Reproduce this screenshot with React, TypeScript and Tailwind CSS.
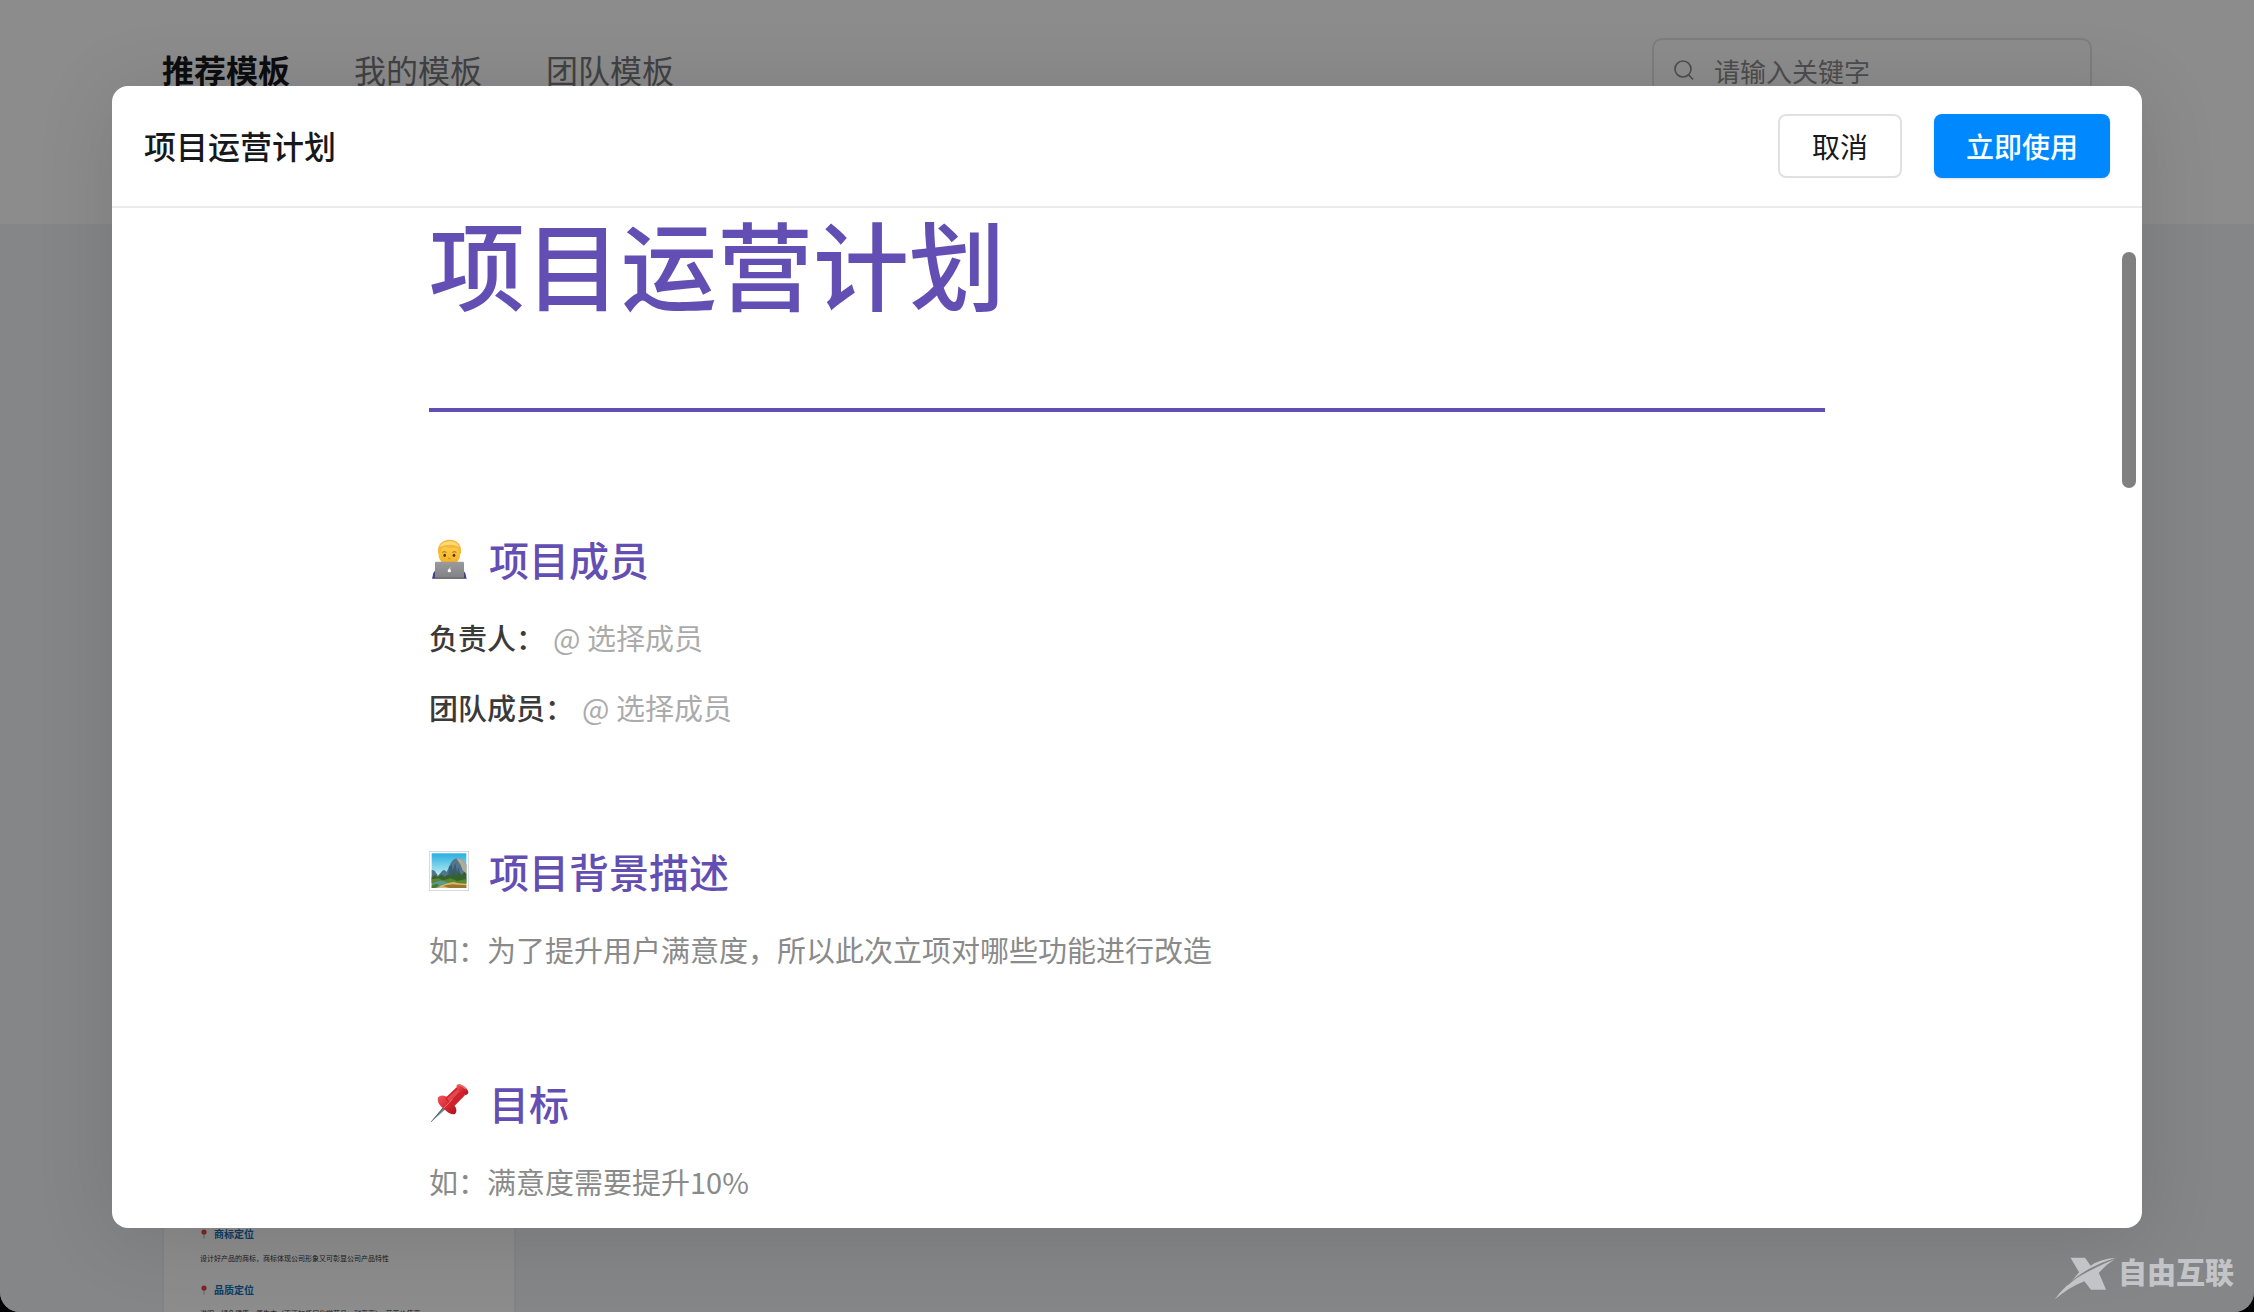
import { ReactNode } from "react";

const tabs = [
  { name: "推荐模板", active: true },
  { name: "我的模板", active: false },
  { name: "团队模板", active: false },
];

function SearchIcon() {
  return (
    <svg viewBox="0 0 20 20" className="size-5 shrink-0" fill="none" stroke="#8c8d8f" strokeWidth="1.6" strokeLinecap="round">
      <circle cx="9" cy="9" r="8" />
      <path d="M15 15.4 18.6 19" />
    </svg>
  );
}

function TechnologistIcon() {
  return (
    <svg viewBox="0 0 120 120" className="size-10 shrink-0">
      <defs>
        <linearGradient id="face" x1="0" y1="0" x2="0" y2="1">
          <stop offset="0" stopColor="#ffd95a" />
          <stop offset="1" stopColor="#f3ac1d" />
        </linearGradient>
        <linearGradient id="lid" x1="0" y1="0" x2="0" y2="1">
          <stop offset="0" stopColor="#9b9b9e" />
          <stop offset="1" stopColor="#818184" />
        </linearGradient>
      </defs>
      <path d="M9 119 13 103Q17 93 28 91L95 91Q106 94 109 103L113 119Z" fill="#3c4486" />
      <ellipse cx="61" cy="42" rx="33" ry="38" fill="url(#face)" />
      <path d="M27 43C24 18 38 2 62 2S99 18 96 43L90 44Q90 29 80 26 63 29 45 24 34 31 33 44Z" fill="#f6b73c" />
      <path d="M31 24Q40 8 60 7 84 7 91 24 72 13 46 19Z" fill="#ffdc72" />
      <ellipse cx="47" cy="49" rx="4" ry="5" fill="#5b3413" />
      <ellipse cx="75" cy="49" rx="4" ry="5" fill="#5b3413" />
      <path d="M40 40Q46 36 52 40M70 40Q76 36 82 40" stroke="#a8690f" strokeWidth="3" fill="none" />
      <path d="M58 58Q61 60 64 58" stroke="#c27c17" strokeWidth="3" fill="none" />
      <rect x="18" y="68" width="87" height="51" rx="4" fill="url(#lid)" />
      <path d="M18 115H105V119H18Z" fill="#6d6d70" />
      <circle cx="61" cy="95" r="5" fill="#fff" />
      <path d="M61 90Q62 87 65 86" stroke="#fff" strokeWidth="2" fill="none" />
    </svg>
  );
}

function LandscapeIcon() {
  return (
    <svg viewBox="0 0 120 120" className="size-10 shrink-0">
      <defs>
        <linearGradient id="sky" x1="0" y1="0" x2="0" y2="1">
          <stop offset="0" stopColor="#27aee0" />
          <stop offset="0.6" stopColor="#b4eaf2" />
        </linearGradient>
      </defs>
      <rect x="1" y="1" width="118" height="118" fill="#fff" stroke="#c5c9cb" strokeWidth="2" />
      <rect x="8" y="7" width="104" height="104" fill="url(#sky)" />
      <path d="M8 56 17 59 27 74 40 59Q47 54 53 63L60 47Q68 26 82 22 94 20 102 29L112 40V86H8Z" fill="#52758b" />
      <path d="M82 22Q94 20 102 29L112 40V69L101 58 95 42Z" fill="#b2ab96" />
      <path d="M60 47 68 41 71 59 79 37 84 62 90 48 93 74H58Z" fill="#385d74" />
      <path d="M8 78 18 72 26 79 37 70 47 77 56 71 66 74 73 64 82 74 90 63 98 72 106 62 112 68V97H8Z" fill="#36632c" />
      <path d="M8 85 28 82 41 88 65 82 84 90 112 84V99H8Z" fill="#5c8630" />
      <path d="M8 99Q31 85 45 91L59 97 43 111H8Z" fill="#5c9990" />
      <path d="M24 111Q45 97 75 93 87 98 112 98V111Z" fill="#d9b866" />
      <path d="M42 105Q69 97 85 101L112 103V111H61Z" fill="#9b7433" />
      <path d="M8 104 22 98 31 103 18 111H8Z" fill="#487c2b" />
    </svg>
  );
}

function PushpinIcon() {
  return (
    <svg viewBox="0 0 120 120" className="size-10 shrink-0">
      <defs>
        <linearGradient id="pin" x1="0" y1="0" x2="1" y2="1">
          <stop offset="0" stopColor="#f25b5f" />
          <stop offset="0.55" stopColor="#d8252d" />
          <stop offset="1" stopColor="#a5141d" />
        </linearGradient>
      </defs>
      <path d="M6 117 45 68 53 76Z" fill="#75848e" />
      <path d="M6 117 46 71" stroke="#3f4b55" strokeWidth="2" />
      <path d="M27 43Q38 32 57 43L75 65Q88 83 78 93 65 98 45 78 21 61 27 43Z" fill="url(#pin)" />
      <path d="M49 45 83 13 108 37 77 68Q59 65 49 45Z" fill="#cf222b" />
      <path d="M54 46 86 18 94 24 62 57Z" fill="#e2484d" />
      <path d="M84 5Q93 0 107 11 122 24 116 33 108 41 94 28 79 14 84 5Z" fill="url(#pin)" />
      <path d="M89 6Q98 5 109 17" stroke="#f06c6f" strokeWidth="4" strokeLinecap="round" fill="none" />
      <path d="M45 75 70 49" stroke="#ee9a9c" strokeWidth="2" />
    </svg>
  );
}

function MapPinIcon() {
  return (
    <svg viewBox="0 0 8 10" className="h-[10px] w-2 shrink-0">
      <path d="M3.6 5H4.4V9.4H3.6Z" fill="#99a0a5" />
      <circle cx="4" cy="3" r="2.6" fill="#e0444c" />
    </svg>
  );
}

function Watermark() {
  return (
    <div className="absolute right-5 bottom-3 flex items-start text-[#c3c4c7]">
      <svg viewBox="18 28 194 130" className="h-[43px] w-16" fill="currentColor">
        <path d="M68 30H112L129 54Q158 33 210 30 121 56 70 103L94 74Z" />
        <path d="M20 157Q52 112 93 88 140 60 204 32 176 50 154 76L176 127H130L110 101Q61 120 20 157Z" />
        <path d="M60 112Q112 61 210 30" stroke="#858688" strokeWidth="3" fill="none" />
      </svg>
      <span className="text-[29px] leading-7 font-black">自由互联</span>
    </div>
  );
}

function SectionTitle({ icon, children }: { icon: ReactNode; children: ReactNode }) {
  return (
    <h2 className="flex items-center gap-5 text-[40px] leading-[60px] font-medium text-[#634fb3]">
      {icon}
      {children}
    </h2>
  );
}

function MemberRow({ label }: { label: string }) {
  return (
    <div className="flex items-center gap-2 text-[29px] leading-[48px]">
      <span className="font-medium text-[#3a3a3a]">{label}</span>
      <button type="button" className="font-normal text-[#ababab]">@ 选择成员</button>
    </div>
  );
}

function TemplateCard() {
  return (
    <article className="mt-8 w-[354px] border-2 border-[#eceef2] bg-white px-9 pt-[968px] text-[7px] leading-3 text-[#333333]">
      <h3 className="flex items-center gap-[6px] text-[10px] leading-4 font-bold text-[#0f6fb8]">
        <MapPinIcon />
        商标定位
      </h3>
      <p className="mt-[10px] whitespace-nowrap">设计好产品的商标，商标体现公司形象又可彰显公司产品特性</p>
      <h3 className="mt-[18px] flex items-center gap-[6px] text-[10px] leading-4 font-bold text-[#0f6fb8]">
        <MapPinIcon />
        品质定位
      </h3>
      <p className="mt-[9px] whitespace-nowrap">说明：绿色健康，原生态（不添加任何化学药品、耐高高），营养价值高</p>
    </article>
  );
}

export default function App() {
  return (
    <div className="h-screen bg-black font-['Noto_Sans_CJK_SC',sans-serif]">
      <div className="relative h-full overflow-hidden rounded-b-[20px] bg-[#f3f5f8]">
        {/* Template gallery */}
        <header className="flex h-56 items-start justify-between bg-white px-[162px] pt-[38px]">
          <nav className="flex gap-16">
            {tabs.map((tab) => (
              <a
                key={tab.name}
                href="#"
                className={`text-[32px] leading-[62px] ${tab.active ? "font-bold text-[#17181a]" : "font-normal text-[#77787a]"}`}
              >
                {tab.name}
              </a>
            ))}
          </nav>
          <label className="flex h-16 w-[440px] items-center gap-5 rounded-[10px] border-2 border-[#e2e3e5] px-5">
            <SearchIcon />
            <input
              type="text"
              aria-label="搜索模板"
              placeholder="请输入关键字"
              className="min-w-0 flex-1 text-[26px] outline-none placeholder:text-[#8c8d8f]"
            />
          </label>
        </header>
        <main className="px-[162px]">
          <TemplateCard />
        </main>

        {/* Preview dialog */}
        <div className="absolute inset-0 flex bg-black/45 px-28 pt-[86px] pb-[84px]">
          <div
            role="dialog"
            aria-label="项目运营计划"
            className="flex min-w-0 flex-1 flex-col overflow-hidden rounded-2xl bg-white shadow-[0_8px_80px_rgba(0,0,0,0.12)]"
          >
            <div className="flex shrink-0 items-start justify-between border-b-2 border-[#ebebeb] px-8 py-7">
              <h4 className="text-[32px] leading-[62px] font-medium text-[#17181a]">项目运营计划</h4>
              <div className="flex gap-8">
                <button type="button" className="h-16 rounded-lg border-2 border-[#e0e1e3] px-8 text-[28px] text-[#17181a]">
                  取消
                </button>
                <button type="button" className="h-16 rounded-lg bg-[#0089ff] px-8 text-[28px] font-medium text-white shadow-sm">
                  立即使用
                </button>
              </div>
            </div>

            <div className="relative min-h-0 flex-1 overflow-hidden">
              <div className="mx-auto max-w-[1396px]">
                <h1 className="text-[96px] leading-[108px] font-medium text-[#634fb3]">项目运营计划</h1>
                <hr className="mt-[92px] border-t-4 border-[#634fb3]" />

                <section className="mt-[117px]">
                  <SectionTitle icon={<TechnologistIcon />}>项目成员</SectionTitle>
                  <div className="mt-6 flex flex-col gap-[22px]">
                    <MemberRow label="负责人：" />
                    <MemberRow label="团队成员：" />
                  </div>
                </section>

                <section className="mt-[110px]">
                  <SectionTitle icon={<LandscapeIcon />}>项目背景描述</SectionTitle>
                  <p className="mt-6 text-[29px] leading-[48px] font-normal text-[#8a8a8a]">
                    如：为了提升用户满意度，所以此次立项对哪些功能进行改造
                  </p>
                </section>

                <section className="mt-[100px]">
                  <SectionTitle icon={<PushpinIcon />}>目标</SectionTitle>
                  <p className="mt-6 text-[29px] leading-[48px] font-normal text-[#8a8a8a]">如：满意度需要提升10%</p>
                </section>
              </div>
              <div className="absolute top-11 right-[6px] h-[236px] w-[14px] rounded-full bg-[#808080]" />
            </div>
          </div>
        </div>

        <Watermark />
      </div>
    </div>
  );
}
